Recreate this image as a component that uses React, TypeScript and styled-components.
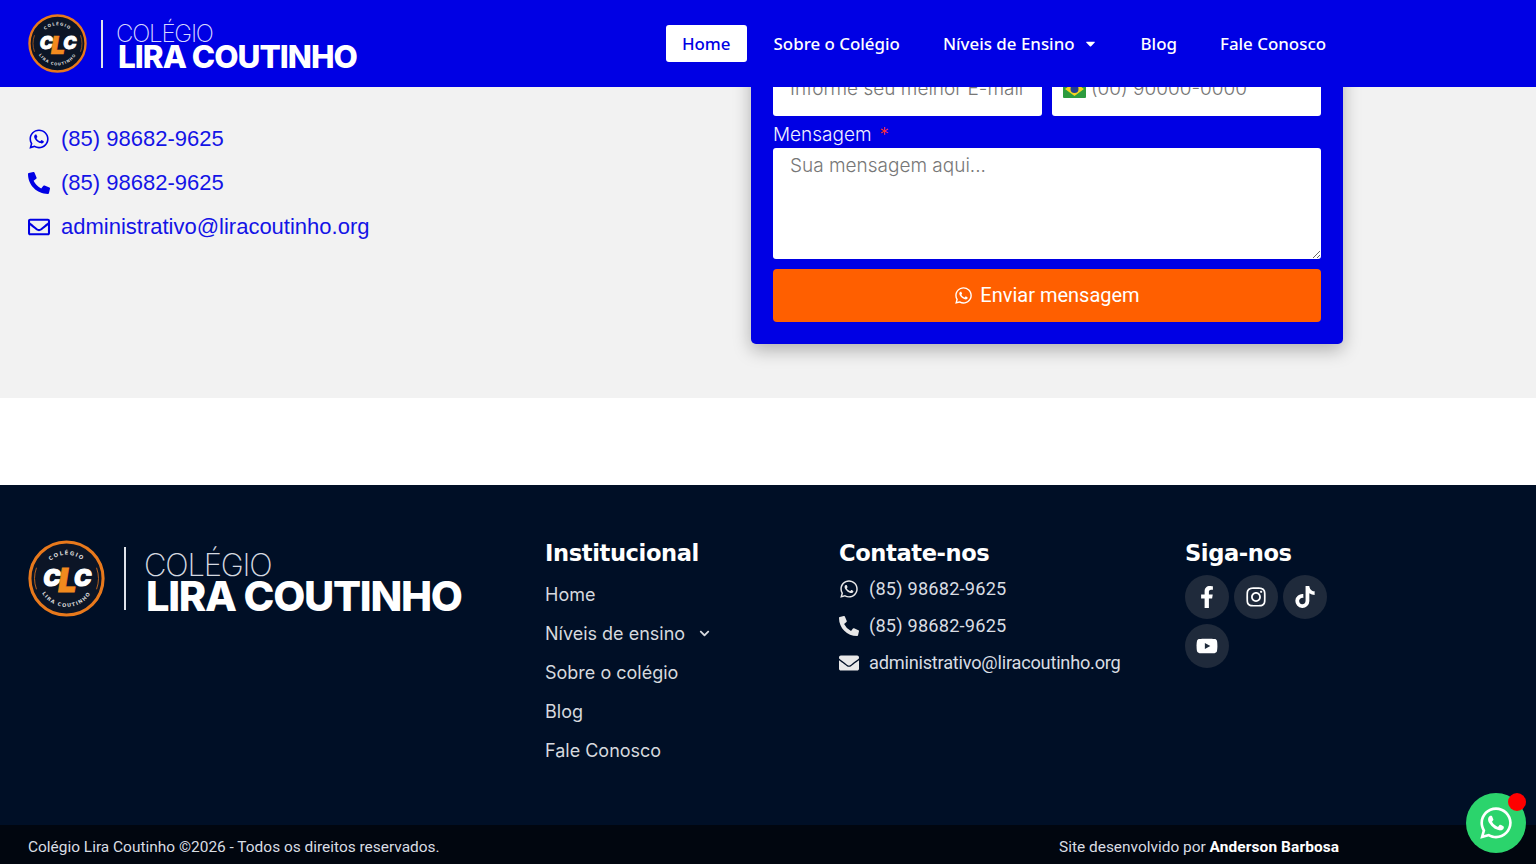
import React from 'react';
import styled, { createGlobalStyle } from 'styled-components';
import {
  FaWhatsapp,
  FaPhoneAlt,
  FaRegEnvelope,
  FaEnvelope,
  FaFacebookF,
  FaInstagram,
  FaTiktok,
  FaYoutube,
  FaChevronDown,
  FaCaretDown,
} from 'react-icons/fa';

const BLUE = '#0000e4';
const NAVY = '#000f26';

const GlobalStyle = createGlobalStyle`
  html, body {
    margin: 0;
    padding: 0;
    background: #fff;
    overflow: hidden;
  }
  * { box-sizing: border-box; }
  body { font-family: "Noto Sans", sans-serif; }
`;

const Page = styled.div`
  position: relative;
  width: 1536px;
  height: 864px;
  overflow: hidden;
`;

const Header = styled.header`
  position: absolute;
  top: 0;
  left: 0;
  right: 0;
  z-index: 5;
  height: 87px;
  padding: 0 194px 0 28px;
  background: ${BLUE};
  display: flex;
  align-items: center;
  justify-content: space-between;
`;

const LogoWrap = styled.div<{ $large?: boolean }>`
  display: flex;
  align-items: center;
  color: #fff;
  font-family: Inter, sans-serif;
  gap: ${p => (p.$large ? '19px' : '14px')};
`;

const LogoDivider = styled.span<{ $large?: boolean }>`
  display: block;
  width: 2px;
  height: ${p => (p.$large ? '63px' : '48px')};
  background: #dfe3ea;
`;

const LogoText = styled.div`
  display: flex;
  flex-direction: column;
  margin-top: 10px;
`;

const LogoTop = styled.span<{ $large?: boolean }>`
  margin-left: -1px;
  font-weight: 200;
  font-size: ${p => (p.$large ? '31px' : '24px')};
  line-height: ${p => (p.$large ? '25px' : '16px')};
  letter-spacing: -1.2px;
  color: ${p => (p.$large ? '#d5d9e0' : '#d8d8ff')};
`;

const LogoBottom = styled.span<{ $large?: boolean }>`
  font-weight: 800;
  font-size: ${p => (p.$large ? '41.6px' : '31.5px')};
  line-height: ${p => (p.$large ? '39px' : '30px')};
  letter-spacing: ${p => (p.$large ? '-1.3px' : '-1px')};
  margin-left: 1px;
  white-space: nowrap;
`;

const Nav = styled.nav`
  display: flex;
  align-items: center;
  gap: 11px;
`;

const NavLink = styled.a<{ $active?: boolean }>`
  display: flex;
  align-items: center;
  gap: 8px;
  height: 37px;
  padding: 0 16px;
  border-radius: 3px;
  font-size: 16.9px;
  font-weight: 500;
  color: ${p => (p.$active ? BLUE : '#fff')};
  background: ${p => (p.$active ? '#fff' : 'transparent')};
  white-space: nowrap;
`;

const ContactSection = styled.section`
  height: 398px;
  background: #f2f2f2;
  padding: 0 0 54px 28px;
  display: grid;
  grid-template-columns: 723px 592px;
`;

const ContactList = styled.div`
  padding-top: 117px;
`;

const ContactRow = styled.a`
  display: flex;
  align-items: center;
  gap: 11px;
  height: 44px;
  font-family: "Liberation Sans", Arial, sans-serif;
  font-size: 22px;
  color: #1414e6;
`;

const ContactIcon = styled.span`
  width: 22px;
  display: flex;
  justify-content: center;
  color: ${BLUE};
  font-size: 22px;
`;

const FormCard = styled.form`
  align-self: end;
  background: ${BLUE};
  border-radius: 5px;
  padding: 22px;
  box-shadow: 0 6px 18px rgba(0, 0, 0, 0.28);
  display: flex;
  flex-direction: column;
`;

const FieldRow = styled.div`
  display: grid;
  grid-template-columns: minmax(0, 1fr) minmax(0, 1fr);
  gap: 10px;
`;

const inputText = `
  font-family: Inter, "Noto Sans", sans-serif;
  font-size: 19px;
  font-weight: 300;
  color: #444;
  &::placeholder { color: #777; opacity: 1; }
`;

const TextInput = styled.input`
  ${inputText}
  width: 100%;
  height: 53px;
  padding: 0 17px 2px;
  background: #fff;
  border: none;
  border-radius: 3px;
  outline: none;
`;

const PhoneField = styled.div`
  display: flex;
  align-items: center;
  gap: 5px;
  height: 53px;
  padding: 0 0 2px 11px;
  background: #fff;
  border-radius: 3px;
`;

const PhoneInput = styled.input`
  ${inputText}
  flex: 1;
  min-width: 0;
  border: none;
  outline: none;
  background: none;
  padding: 0;
`;

const FieldLabel = styled.label`
  margin-top: 7px;
  height: 25px;
  line-height: 24px;
  font-family: Inter, "Noto Sans", sans-serif;
  font-size: 19px;
  font-weight: 300;
  color: #f0f0ff;
`;

const Required = styled.span`
  color: #ff3030;
  margin-left: 8px;
`;

const MessageInput = styled.textarea`
  ${inputText}
  display: block;
  width: 100%;
  height: 111px;
  padding: 6px 17px;
  background: #fff;
  border: none;
  border-radius: 3px;
  outline: none;
`;

const SendButton = styled.button`
  margin-top: 10px;
  height: 53px;
  padding-bottom: 2px;
  display: flex;
  align-items: center;
  justify-content: center;
  gap: 7px;
  background: #ff5f00;
  border: none;
  border-radius: 4px;
  color: #fff;
  font-family: Roboto, sans-serif;
  font-size: 20px;
  font-weight: 400;
`;

const Spacer = styled.div`
  height: 87px;
  background: #fff;
`;

const Footer = styled.footer`
  height: 340px;
  padding: 55px 0 0 28px;
  background: ${NAVY};
  display: grid;
  grid-template-columns: 517px 294px 346px 1fr;
  align-items: start;
`;

const FooterColumn = styled.div`
  display: flex;
  flex-direction: column;
`;

const FooterHeading = styled.h3<{ $gap: number }>`
  margin: 0 0 ${p => p.$gap}px;
  height: 26px;
  line-height: 26px;
  font-family: "DejaVu Sans", sans-serif;
  font-size: 22.6px;
  font-weight: 700;
  letter-spacing: -0.4px;
  color: #fff;
`;

const FooterLink = styled.a`
  display: flex;
  align-items: center;
  gap: 14px;
  height: 39px;
  font-family: Inter, sans-serif;
  font-size: 18px;
  color: #d6d9de;
`;

const FooterContact = styled.a<{ $spacing: number }>`
  display: flex;
  align-items: center;
  gap: 10px;
  height: 37px;
  font-family: Roboto, sans-serif;
  font-size: 18.2px;
  letter-spacing: ${p => p.$spacing}px;
  color: #d9dde3;
`;

const FooterContactIcon = styled.span`
  width: 20px;
  display: flex;
  justify-content: center;
  font-size: 20px;
  color: #e8e8e8;
`;

const SocialGrid = styled.div`
  display: flex;
  flex-wrap: wrap;
  gap: 5px;
  width: 150px;
`;

const SocialButton = styled.a`
  width: 44px;
  height: 44px;
  border-radius: 50%;
  background: #1f2a3b;
  color: #fff;
  font-size: 22px;
  display: flex;
  align-items: center;
  justify-content: center;
`;

const BottomBar = styled.div`
  height: 39px;
  padding: 4px 0 0 28px;
  background: #01060f;
  display: flex;
  align-items: center;
  font-family: Roboto, sans-serif;
  font-size: 15.45px;
  color: #d9dde3;
`;

const Credit = styled.span`
  position: absolute;
  left: 1059px;
`;

const CreditName = styled.strong`
  color: #fff;
  letter-spacing: 0.1px;
`;

const WhatsappFloat = styled.a`
  position: absolute;
  left: 1466px;
  top: 793px;
  width: 60px;
  height: 60px;
  border-radius: 50%;
  background: #2bd46c;
  color: #fff;
  font-size: 36px;
  display: flex;
  align-items: center;
  justify-content: center;
`;

const FloatBadge = styled.span`
  position: absolute;
  top: 0;
  right: 0;
  width: 18px;
  height: 18px;
  border-radius: 50%;
  background: #ff0000;
`;

const Emblem: React.FC<{ size: number; id: string }> = ({ size, id }) => (
  <svg width={size} height={size} viewBox="0 0 100 100">
    <defs>
      <path id={`${id}-top`} d="M19 50 A31 31 0 0 1 81 50" />
      <path id={`${id}-bottom`} d="M13 50 A37 37 0 0 0 87 50" />
    </defs>
    <circle cx="50" cy="50" r="47.5" fill="#0c1526" stroke="#e8791c" strokeWidth="4" />
    <path d="M11 36 A41 41 0 0 0 11 64" fill="none" stroke="#e8791c" strokeWidth="1" />
    <path d="M89 36 A41 41 0 0 1 89 64" fill="none" stroke="#e8791c" strokeWidth="1" />
    <text fontFamily="DejaVu Sans, sans-serif" fontSize="7" fontWeight="700" fill="#d8d8d8" letterSpacing="1.6">
      <textPath href={`#${id}-top`} startOffset="50%" textAnchor="middle">COLÉGIO</textPath>
    </text>
    <text fontFamily="DejaVu Sans, sans-serif" fontSize="6.5" fontWeight="700" fill="#d8d8d8" letterSpacing="1.4">
      <textPath href={`#${id}-bottom`} startOffset="50%" textAnchor="middle">LIRA COUTINHO</textPath>
    </text>
    <g fontFamily="Inter, sans-serif" fontWeight="900" fontStyle="italic" textAnchor="middle">
      <text x="31" y="60" fontSize="30" fill="#fff" stroke="#fff" strokeWidth="1.5">C</text>
      <text x="71" y="60" fontSize="30" fill="#fff" stroke="#fff" strokeWidth="1.5">C</text>
      <text x="51" y="68" fontSize="42" fill="#f28a1e" stroke="#f28a1e" strokeWidth="1">L</text>
    </g>
  </svg>
);

const Logo: React.FC<{ large?: boolean }> = ({ large }) => (
  <LogoWrap $large={large}>
    <Emblem size={large ? 77 : 59} id={large ? 'foot' : 'head'} />
    <LogoDivider $large={large} />
    <LogoText>
      <LogoTop $large={large}>COLÉGIO</LogoTop>
      <LogoBottom $large={large}>LIRA COUTINHO</LogoBottom>
    </LogoText>
  </LogoWrap>
);

const BrazilFlag = () => (
  <svg width="23" height="18" viewBox="0 0 23 18">
    <rect width="23" height="18" rx="1" fill="#2d9b3f" />
    <path d="M11.5 2 L21 9 L11.5 16 L2 9 Z" fill="#f4d320" />
    <circle cx="11.5" cy="9" r="4" fill="#23408f" />
  </svg>
);

export default function App() {
  return (
    <Page>
      <GlobalStyle />
      <Header>
        <Logo />
        <Nav>
          <NavLink $active>Home</NavLink>
          <NavLink>Sobre o Colégio</NavLink>
          <NavLink>Níveis de Ensino <FaCaretDown size={15} /></NavLink>
          <NavLink>Blog</NavLink>
          <NavLink>Fale Conosco</NavLink>
        </Nav>
      </Header>

      <ContactSection>
        <ContactList>
          <ContactRow><ContactIcon><FaWhatsapp /></ContactIcon>(85) 98682-9625</ContactRow>
          <ContactRow><ContactIcon><FaPhoneAlt /></ContactIcon>(85) 98682-9625</ContactRow>
          <ContactRow><ContactIcon><FaRegEnvelope /></ContactIcon>administrativo@liracoutinho.org</ContactRow>
        </ContactList>
        <FormCard>
          <FieldRow>
            <TextInput placeholder="Informe seu melhor E-mail" />
            <PhoneField>
              <BrazilFlag />
              <PhoneInput placeholder="(00) 90000-0000" />
            </PhoneField>
          </FieldRow>
          <FieldLabel>Mensagem<Required>*</Required></FieldLabel>
          <MessageInput placeholder="Sua mensagem aqui..." />
          <SendButton type="button"><FaWhatsapp size={19} />Enviar mensagem</SendButton>
        </FormCard>
      </ContactSection>

      <Spacer />

      <Footer>
        <Logo large />
        <FooterColumn>
          <FooterHeading $gap={9}>Institucional</FooterHeading>
          <FooterLink>Home</FooterLink>
          <FooterLink>Níveis de ensino <FaChevronDown size={11} /></FooterLink>
          <FooterLink>Sobre o colégio</FooterLink>
          <FooterLink>Blog</FooterLink>
          <FooterLink>Fale Conosco</FooterLink>
        </FooterColumn>
        <FooterColumn>
          <FooterHeading $gap={4}>Contate-nos</FooterHeading>
          <FooterContact $spacing={0.2}><FooterContactIcon><FaWhatsapp /></FooterContactIcon>(85) 98682-9625</FooterContact>
          <FooterContact $spacing={0.2}><FooterContactIcon><FaPhoneAlt /></FooterContactIcon>(85) 98682-9625</FooterContact>
          <FooterContact $spacing={-0.22}><FooterContactIcon><FaEnvelope /></FooterContactIcon>administrativo@liracoutinho.org</FooterContact>
        </FooterColumn>
        <FooterColumn>
          <FooterHeading $gap={9}>Siga-nos</FooterHeading>
          <SocialGrid>
            <SocialButton><FaFacebookF /></SocialButton>
            <SocialButton><FaInstagram /></SocialButton>
            <SocialButton><FaTiktok /></SocialButton>
            <SocialButton><FaYoutube /></SocialButton>
          </SocialGrid>
        </FooterColumn>
      </Footer>

      <BottomBar>
        <span>Colégio Lira Coutinho ©2026 - Todos os direitos reservados.</span>
        <Credit>Site desenvolvido por <CreditName>Anderson Barbosa</CreditName></Credit>
      </BottomBar>

      <WhatsappFloat>
        <FaWhatsapp />
        <FloatBadge />
      </WhatsappFloat>
    </Page>
  );
}
